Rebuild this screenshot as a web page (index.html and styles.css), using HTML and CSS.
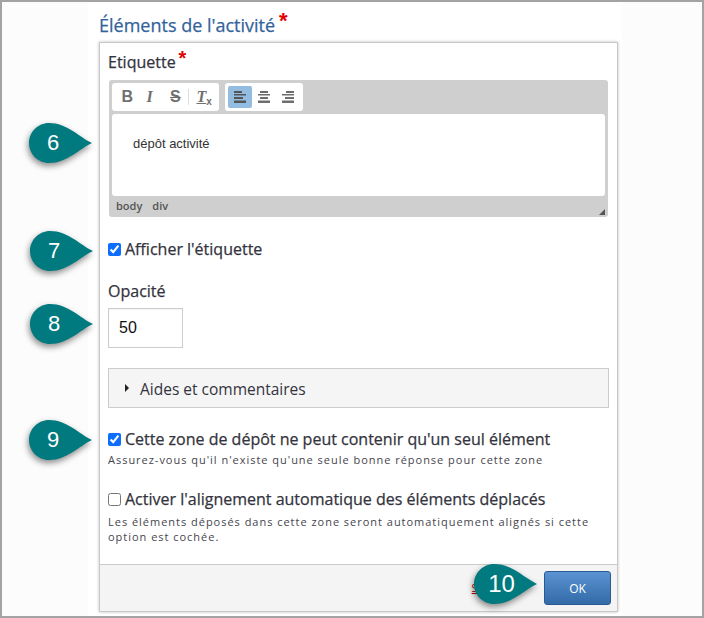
FILE: index.html
```html
<!DOCTYPE html>
<html lang="fr">
<head>
<meta charset="utf-8">
<title>Éléments de l'activité</title>
<link rel="stylesheet" href="styles.css">
</head>
<body>
<div class="frame">
  <main class="column">
    <h1 class="title">Éléments de l'activité<span class="req">*</span></h1>
    <section class="modal">
      <div class="modal-body">
        <label class="field-label label-first">Etiquette<span class="req req-small">*</span></label>
        <div class="editor">
          <div class="toolbar">
            <div class="tool-group">
              <span class="tool tool-b">B</span>
              <span class="tool tool-i">I</span>
              <span class="tool tool-s">S</span>
              <span class="tool-sep"></span>
              <span class="tool tool-tx"><span class="tx-t">T</span><span class="tx-x">x</span></span>
            </div>
            <div class="tool-group">
              <span class="tool active">
                <svg width="12" height="12" viewBox="0 0 12 12"><path d="M0 0h8v2H0zM0 3h12v1.500H0zM0 6h9v2H0zM0 9.500h12V12H0z" fill="#555"/></svg>
              </span>
              <span class="tool">
                <svg width="12" height="12" viewBox="0 0 12 12"><path d="M2 0h8v2H2zM0 3h12v1.500H0zM2 6h8v2H2zM0 9.500h12V12H0z" fill="#6e6e6e"/></svg>
              </span>
              <span class="tool">
                <svg width="12" height="12" viewBox="0 0 12 12"><path d="M4 0h8v2H4zM0 3h12v1.500H0zM3 6h9v2H3zM0 9.500h12V12H0z" fill="#6e6e6e"/></svg>
              </span>
            </div>
          </div>
          <div class="editor-content">dépôt activité</div>
          <div class="editor-path"><span>body</span><span>div</span></div>
          <i class="grip"></i>
        </div>

        <label class="check-row row-show"><input type="checkbox" checked><span>Afficher l'étiquette</span></label>

        <label class="field-label label-opacity">Opacité</label>
        <input class="num-input" type="text" value="50">

        <div class="accordion"><i class="caret"></i><span class="accordion-text">Aides et commentaires</span></div>

        <label class="check-row row-single"><input type="checkbox" checked><span>Cette zone de dépôt ne peut contenir qu'un seul élément</span></label>
        <p class="help">Assurez-vous qu'il n'existe qu'une seule bonne réponse pour cette zone</p>

        <label class="check-row row-align"><input type="checkbox"><span>Activer l'alignement automatique des éléments déplacés</span></label>
        <p class="help help-last">Les éléments déposés dans cette zone seront automatiquement alignés si cette option est cochée.</p>
      </div>
      <footer class="modal-footer">
        <a class="delete">Supprimer</a>
        <button class="ok" type="button">OK</button>
      </footer>
    </section>
  </main>

  <div class="callout c6"><svg viewBox="0 0 64 42"><path d="M20 1C38 1 50 15 63 21 50 27 38 41 20 41 9 41 0 32 0 21S9 1 20 1Z"/></svg><span>6</span></div>
  <div class="callout c7"><svg viewBox="0 0 64 42"><path d="M20 1C38 1 50 15 63 21 50 27 38 41 20 41 9 41 0 32 0 21S9 1 20 1Z"/></svg><span>7</span></div>
  <div class="callout c8"><svg viewBox="0 0 64 42"><path d="M20 1C38 1 50 15 63 21 50 27 38 41 20 41 9 41 0 32 0 21S9 1 20 1Z"/></svg><span>8</span></div>
  <div class="callout c9"><svg viewBox="0 0 64 42"><path d="M20 1C38 1 50 15 63 21 50 27 38 41 20 41 9 41 0 32 0 21S9 1 20 1Z"/></svg><span>9</span></div>
  <div class="callout c10"><svg viewBox="0 0 64 42"><path d="M20 1C38 1 50 15 63 21 50 27 38 41 20 41 9 41 0 32 0 21S9 1 20 1Z"/></svg><span>10</span></div>
</div>
</body>
</html>
```

FILE: styles.css
```css
* { box-sizing: border-box; }
html, body { margin: 0; padding: 0; }
body { width: 704px; height: 618px; overflow: hidden; font-family: "Open Sans", sans-serif; color: #33333d; }

.frame {
  position: relative;
  width: 704px;
  height: 618px;
  border: 2px solid #a3a3a3;
  background: #fcfcfc;
  overflow: hidden;
}
.column {
  width: 534px;
  height: 614px;
  margin-left: 86px;
  padding: 0 0 0 11px;
  background: #fff;
}
.title {
  margin: 0;
  height: 40px;
  padding-top: 11px;
  font-size: 18px;
  line-height: 24px;
  font-weight: 400;
  color: #33639b;
  -webkit-text-stroke: 0.25px #33639b;
}
.req { color: #e00000; font-family: "Liberation Sans", sans-serif; font-weight: 700; font-size: 22px; line-height: 10px; margin-left: 4px; position: relative; top: -4px; -webkit-text-stroke: 0; }
.req-small { font-size: 20px; margin-left: 3px; top: -3px; }

.modal {
  width: 519px;
  height: 570px;
  background: #fff;
  border: 1px solid #c8c8c8;
  box-shadow: 0 0 3px rgba(0,0,0,.25);
  display: flex;
  flex-direction: column;
}
.modal-body { flex: 1; padding: 0 8px 0 8px; }
.field-label { display: block; font-size: 16px; line-height: 20px; font-weight: 400; color: #33333d; -webkit-text-stroke: 0.25px #33333d; }
.label-first { padding-top: 9px; height: 37px; }

.editor { position: relative; width: 499px; height: 137px; margin-left: 1px; background: #cfcfcf; border-radius: 3px; padding: 3px 3px 0; }
.toolbar { display: flex; gap: 6px; height: 28px; }
.tool-group { display: flex; align-items: center; background: #fff; border-radius: 3px; height: 28px; padding: 0 3px; }
.tool-group:first-child { width: 107px; padding-left: 4px; }
.tool { display: flex; align-items: center; justify-content: center; width: 24px; height: 22px; color: #707070; border-radius: 2px; }
.tool-b { font: 700 16px "Liberation Sans", sans-serif; padding-right: 1px; }
.tool-i { font: italic 700 16px "Liberation Serif", serif; padding-right: 4px; }
.tool-s { font: 700 16px "Liberation Sans", sans-serif; text-decoration: line-through; }
.tool-sep { width: 1px; height: 16px; background: #ddd; margin: 0 3px 0 1px; }
.tool-tx { font: italic 700 16px "Liberation Serif", serif; }
.tx-t { text-decoration: underline; }
.tx-x { font: 700 10px "Liberation Sans", sans-serif; position: relative; top: 4px; }
.active { background: #92bce0; }
.editor-content {
  height: 82px;
  margin-top: 3px;
  padding: 22px 0 0 21px;
  background: #fff;
  border-radius: 3px;
  font: 13px/16px "Liberation Sans", sans-serif;
  color: #333;
}
.editor-path { display: flex; gap: 10px; padding: 2px 0 0 4px; font-size: 11px; line-height: 15px; font-weight: 600; color: #555; }
.grip { position: absolute; right: 3px; bottom: 2px; width: 0; height: 0; border-style: solid; border-width: 0 0 6px 6px; border-color: transparent transparent #555 transparent; }

.check-row { display: flex; align-items: center; font-size: 16px; line-height: 20px; color: #33333d; -webkit-text-stroke: 0.25px #33333d; }
.check-row input { width: 13px; height: 13px; margin: 0 4px 0 0; accent-color: #0d6efd; }
.row-show { margin-top: 22px; }
.label-opacity { margin-top: 22px; }
.num-input {
  display: block;
  width: 75px;
  height: 40px;
  margin-top: 7px;
  padding: 0 10px;
  border: 1px solid #ccc;
  font: 16px "Liberation Sans", sans-serif;
  color: #111;
  background: #fff;
  box-shadow: inset 0 1px 1px rgba(0,0,0,.05);
}
.accordion {
  display: flex;
  align-items: center;
  width: 501px;
  height: 40px;
  margin-top: 20px;
  padding-left: 16px;
  background: #f5f5f5;
  border: 1px solid #ccc;
  font-size: 15.500px;
  color: #33333d;
}
.accordion-text { padding-top: 1px; }
.caret { width: 0; height: 0; border-style: solid; border-width: 4px 0 4px 4px; border-color: transparent transparent transparent #222; margin-right: 11px; }
.row-single { margin-top: 21px; }
.row-align { margin-top: 22px; }
.help { margin: 3px 0 0; font-size: 11px; line-height: 15px; letter-spacing: .98px; color: #45454d; width: 490px; }
.help-last { margin-top: 5px; }

.modal-footer {
  flex: none;
  display: flex;
  align-items: center;
  justify-content: flex-end;
  gap: 23px;
  height: 47px;
  padding: 0 6px 0 0;
  background: #f4f4f4;
  border-top: 1px solid #ccc;
}
.delete { font: 10px "Open Sans", sans-serif; color: #c00000; text-decoration: underline; }
.ok {
  width: 67px;
  height: 34px;
  padding: 0;
  border: 1px solid #2a5a96;
  border-radius: 3px;
  background: linear-gradient(#5b93d2, #336ba9);
  color: #fff;
  font: 12px "Open Sans", sans-serif;
}

.callout { position: absolute; width: 64px; height: 42px; }
.callout svg { position: absolute; inset: 0; width: 100%; height: 100%; overflow: visible; filter: drop-shadow(-1px 3px 3px rgba(0,0,0,.45)); }
.callout path { fill: #00797f; }
.callout span { position: absolute; left: 0; top: 0; width: 48px; height: 42px; text-align: center; font: 22px/42px "Liberation Sans", sans-serif; color: #fff; }
.c6 { left: 27px; top: 120px; }
.c7 { left: 28px; top: 228px; }
.c8 { left: 28px; top: 301px; }
.c9 { left: 27px; top: 417px; }
.c10 { left: 472px; top: 561px; }
.c10 span { width: 55px; font-size: 24px; }
```
